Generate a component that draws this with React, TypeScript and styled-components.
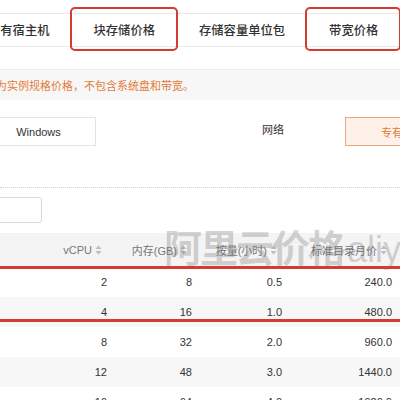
import styled, { createGlobalStyle } from 'styled-components';

const GlobalStyle = createGlobalStyle`
    body {
        margin: 0;
        background: #fff;
    }
`;

const Page = styled.div`
    width: 400px;
    height: 400px;
    overflow: hidden;
    background: #fff;
    font-family: "Liberation Sans", "Noto Sans CJK SC", sans-serif;
    color: #333;
`;

const TabBar = styled.nav`
    display: flex;
    height: 34px;
    margin: 13px 0 0 -34px;
    box-sizing: border-box;
    border-top: 1px solid #e9e9e9;
    border-bottom: 1px solid #e9e9e9;
`;

const Tab = styled.div<{ $marked?: boolean }>`
    position: relative;
    display: flex;
    align-items: center;
    padding: 0 22px;
    font-family: "Noto Sans CJK SC", sans-serif;
    font-size: 12.3px;
    font-weight: 500;
    white-space: nowrap;
    color: #333;

    &::after {
        content: '';
        display: ${({ $marked }) => ($marked ? 'block' : 'none')};
        position: absolute;
        inset: -7px -1px -5px -2px;
        border: 2px solid #d43c31;
        border-radius: 5px;
    }
`;

const Notice = styled.div`
    display: flex;
    align-items: center;
    height: 31px;
    margin-top: 22px;
    box-sizing: border-box;
    background: #f7f7f7;
    border-top: 1px solid #ececec;
    font-family: "Noto Sans CJK SC", sans-serif;
    font-size: 11px;
    color: #e27c3a;
    white-space: nowrap;

    span {
        margin-left: -4px;
    }
`;

const FilterRow = styled.div`
    display: flex;
    align-items: center;
    height: 29px;
    margin-top: 17px;
`;

const Option = styled.div<{ $active?: boolean; $width: number }>`
    display: flex;
    align-items: center;
    justify-content: center;
    flex: none;
    width: ${({ $width }) => $width}px;
    height: 29px;
    box-sizing: border-box;
    border: 1px solid ${({ $active }) => ($active ? '#eca47f' : '#e4e4e4')};
    background: ${({ $active }) => ($active ? '#fdf1ea' : '#fff')};
    color: ${({ $active }) => ($active ? '#e07a3a' : '#333')};
    font-size: 11px;
    white-space: nowrap;
`;

const FilterLabel = styled.span`
    margin: 0 0 6px 166px;
    font-family: "Noto Sans CJK SC", sans-serif;
    font-size: 11px;
    color: #333;
    flex: none;
`;

const DottedRule = styled.div`
    margin-top: 41px;
    border-top: 1px dotted #cfcfcf;
`;

const SearchInput = styled.div`
    width: 60px;
    height: 26px;
    margin: 9px 0 0 -18px;
    box-sizing: border-box;
    border: 1px solid #d9d9d9;
    border-radius: 3px;
`;

const Table = styled.div`
    position: relative;
    margin-top: 10px;
`;

const Row = styled.div<{ $head?: boolean; $striped?: boolean }>`
    display: grid;
    grid-template-columns: 107px 85px 90px 110px;
    align-items: center;
    height: ${({ $head }) => ($head ? 34 : 30)}px;
    background: ${({ $head, $striped }) => ($head ? '#f4f4f4' : $striped ? '#f7f7f7' : '#fff')};
    font-size: 11px;
    color: ${({ $head }) => ($head ? '#777' : '#333')};
`;

const Cell = styled.div<{ $head?: boolean }>`
    display: flex;
    align-items: center;
    justify-content: flex-end;
    gap: 3px;
    padding-right: ${({ $head }) => ($head ? 5 : 0)}px;
    white-space: nowrap;
    font-family: "Liberation Sans", "Noto Sans CJK SC", sans-serif;
`;

const Watermark = styled.div`
    position: absolute;
    top: -6px;
    left: 164px;
    font-family: "Noto Sans CJK SC", sans-serif;
    font-size: 38px;
    font-weight: 700;
    letter-spacing: -2px;
    line-height: 1;
    color: rgba(120, 120, 120, 0.32);
    white-space: nowrap;
    pointer-events: none;

    small {
        font-family: "Liberation Sans", sans-serif;
        font-size: 36px;
        font-weight: 400;
        letter-spacing: 0;
        margin-left: 3px;
    }
`;

const RedLine = styled.div<{ $top: number }>`
    position: absolute;
    left: 0;
    right: 0;
    top: ${({ $top }) => $top}px;
    height: 3px;
    background: #d43c31;
`;

const SortIcon = () => (
    <svg width="7" height="10" viewBox="0 0 7 10">
        <polygon points="3.5,0.5 6.5,4 0.5,4" fill="#bdbdbd" />
        <polygon points="0.5,6 6.5,6 3.5,9.5" fill="#bdbdbd" />
    </svg>
);

const tabs = [
    { label: '专有宿主机' },
    { label: '块存储价格', marked: true },
    { label: '存储容量单位包' },
    { label: '带宽价格', marked: true },
];

const columns = ['vCPU', '内存(GB)', '按量(小时)', '标准目录月价'];

const rows = [
    ['2', '8', '0.5', '240.0'],
    ['4', '16', '1.0', '480.0'],
    ['8', '32', '2.0', '960.0'],
    ['12', '48', '3.0', '1440.0'],
    ['16', '64', '4.0', '1920.0'],
];

const App = () => {
    return (
        <Page>
            <GlobalStyle />
            <TabBar>
                {tabs.map((t) => (
                    <Tab key={t.label} $marked={t.marked}>{t.label}</Tab>
                ))}
            </TabBar>
            <Notice>
                <span>为实例规格价格，不包含系统盘和带宽。</span>
            </Notice>
            <FilterRow>
                <Option $width={115} style={{ marginLeft: -19 }}>Windows</Option>
                <FilterLabel>网络</FilterLabel>
                <Option $width={116} $active style={{ marginLeft: 61 }}>专有网络</Option>
            </FilterRow>
            <DottedRule />
            <SearchInput />
            <Table>
                <Row $head>
                    {columns.map((c) => (
                        <Cell $head key={c}>
                            {c}
                            <SortIcon />
                        </Cell>
                    ))}
                </Row>
                {rows.map((r, i) => (
                    <Row key={i} $striped={i % 2 === 1}>
                        {r.map((v, j) => (
                            <Cell key={j}>{v}</Cell>
                        ))}
                    </Row>
                ))}
                <Watermark>
                    阿里云价格<small>aliyun.com</small>
                </Watermark>
                <RedLine $top={33} />
                <RedLine $top={86} />
            </Table>
        </Page>
    );
};

export default App;
